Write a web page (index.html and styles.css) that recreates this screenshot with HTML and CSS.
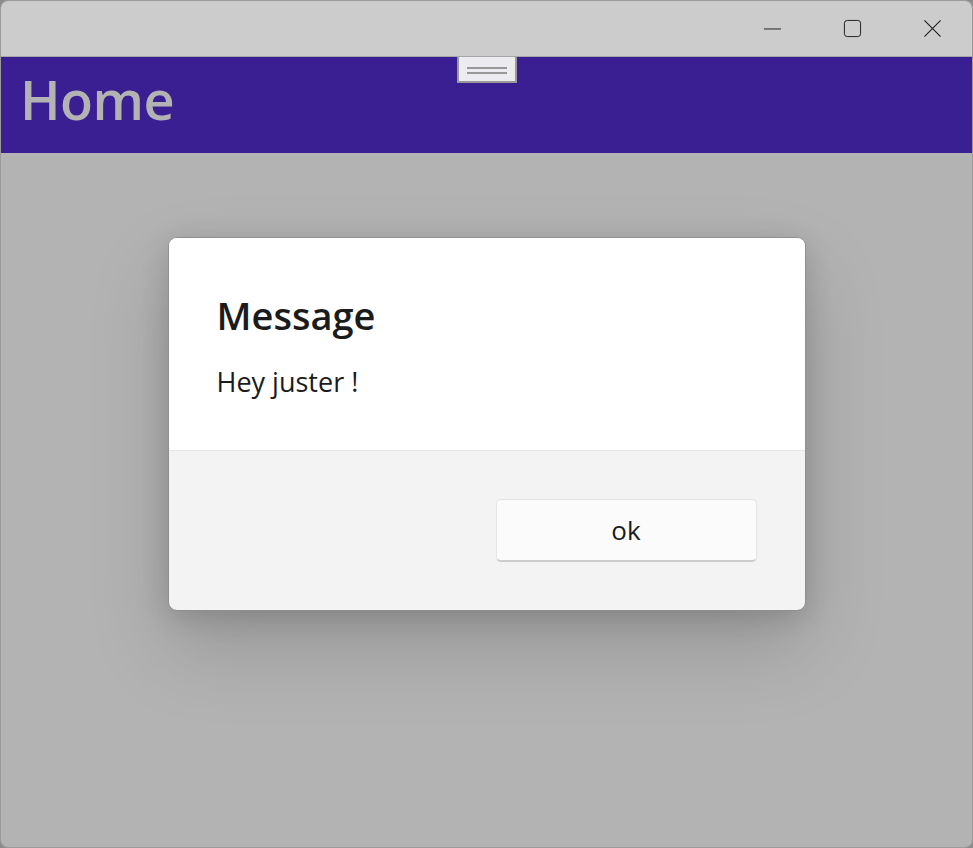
FILE: index.html
```html
<!DOCTYPE html>
<html lang="en">
<head>
  <meta charset="UTF-8">
  <meta name="viewport" content="width=device-width, initial-scale=1.0">
  <title>Home</title>
  <link rel="stylesheet" href="styles.css">
</head>
<body>
  <div class="window">
    <div class="titlebar">
      <button type="button" class="capBtn" id="minBtn">
        <svg width="20" height="20" viewBox="0 0 20 20"><path d="M1 10.5h18" stroke="#1a1a1a" stroke-width="1" fill="none"/></svg>
      </button>
      <button type="button" class="capBtn" id="maxBtn">
        <svg width="20" height="20" viewBox="0 0 20 20"><rect x="1.5" y="1.5" width="17" height="17" rx="3" stroke="#1a1a1a" stroke-width="1" fill="none"/></svg>
      </button>
      <button type="button" class="capBtn" id="closeBtn">
        <svg width="20" height="20" viewBox="0 0 20 20"><path d="M1.5 1.5l17 17M18.5 1.5l-17 17" stroke="#1a1a1a" stroke-width="1.1" fill="none"/></svg>
      </button>
    </div>
    <div class="header">
      <h1 class="pageTitle">Home</h1>
      <div class="handle"><span></span><span></span></div>
    </div>
    <div class="content"></div>

    <div class="overlay">
      <div class="dialog">
        <div class="dialogBody">
          <h2 class="dialogTitle">Message</h2>
          <p class="dialogText">Hey juster !</p>
        </div>
        <div class="dialogFooter">
          <button type="button" class="okBtn" id="okBtn">ok</button>
        </div>
      </div>
    </div>
  </div>
</body>
</html>
```

FILE: styles.css
```css
html, body {
  margin: 0;
  height: 100%;
  background: #8c8c8c;
}
.window {
  position: relative;
  height: 848px;
  box-sizing: border-box;
  border: 1px solid #9a9a9a;
  border-radius: 8px;
  overflow: hidden;
  display: flex;
  flex-direction: column;
  font-family: "Open Sans", "Noto Sans", sans-serif;
}
.titlebar {
  height: 55px;
  background: #cccccc;
  border-bottom: 1px solid #a6a6a6;
  display: flex;
  justify-content: flex-end;
  align-items: center;
  flex-shrink: 0;
}
.capBtn {
  width: 80px;
  height: 55px;
  border: none;
  background: transparent;
  padding: 0;
  display: flex;
  align-items: center;
  justify-content: center;
}
.capBtn svg {
  width: 19px;
  height: 19px;
}
.header {
  position: relative;
  height: 96px;
  background: #3a1f93;
  flex-shrink: 0;
}
.pageTitle {
  margin: 0;
  padding-left: 19px;
  color: #b3b3b3;
  font-size: 54px;
  font-weight: 600;
  line-height: 84px;
  letter-spacing: -0.5px;
}
.handle {
  position: absolute;
  top: 0;
  left: 50%;
  transform: translateX(-50%);
  width: 56px;
  height: 22px;
  background: #ececf0;
  border: 2px solid #999999;
  border-top: none;
  display: flex;
  flex-direction: column;
  align-items: center;
  justify-content: center;
  gap: 3px;
  padding-top: 2px;
}
.handle span {
  display: block;
  width: 40px;
  height: 2px;
  background: #999999;
}
.content {
  flex: 1;
  background: #b3b3b3;
}
.overlay {
  position: absolute;
  inset: 0;
  display: flex;
  align-items: center;
  justify-content: center;
}
.dialog {
  width: 636px;
  border-radius: 9px;
  border: 1px solid #8f8f8f;
  overflow: hidden;
  background: #f3f3f3;
  box-shadow: 0 36px 80px rgba(0, 0, 0, 0.17), 0 6px 28px rgba(0, 0, 0, 0.14);
}
.dialogBody {
  background: #ffffff;
  padding: 52px 48px 50px;
  border-bottom: 1px solid #e5e5e5;
}
.dialogTitle {
  margin: 0 0 24px;
  font-size: 38px;
  font-weight: 600;
  line-height: 50px;
  color: #1b1b1b;
}
.dialogText {
  margin: 0;
  font-size: 27px;
  font-weight: 400;
  line-height: 36px;
  color: #1b1b1b;
}
.dialogFooter {
  display: flex;
  justify-content: flex-end;
  padding: 48px;
}
.okBtn {
  width: 261px;
  height: 63px;
  background: #fbfbfb;
  border: 1px solid #e5e5e5;
  border-bottom: 2px solid #cccccc;
  border-radius: 5px;
  font-family: "Open Sans", "Noto Sans", sans-serif;
  font-size: 26px;
  color: #1b1b1b;
  padding: 0;
}
```
